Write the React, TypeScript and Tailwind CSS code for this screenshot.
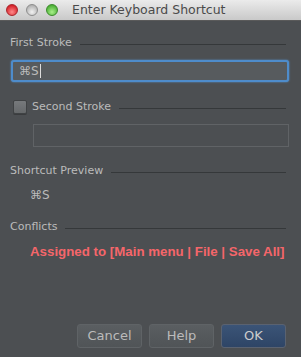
import React from "react";

function Header({ label, className = "" }: { label: string; className?: string }) {
  return (
    <div className={`flex items-center h-[14px] ${className}`}>
      <span className="text-[11px] leading-[14px] text-[#bbbbbb] whitespace-nowrap">{label}</span>
      <div className="flex-1 ml-[8px] mr-[3px] mt-[2px] h-px bg-[#35383a]" />
    </div>
  );
}

function Light({ from, to, border }: { from: string; to: string; border: string }) {
  return (
    <div
      className="w-[12px] h-[12px] rounded-full border"
      style={{ background: `radial-gradient(circle at 50% 70%, ${to}, ${from})`, borderColor: border }}
    />
  );
}

export default function App() {
  return (
    <div
      className="w-[301px] h-[357px] bg-[#4c4f52] flex flex-col overflow-hidden"
      style={{ fontFamily: "'DejaVu Sans', 'Liberation Sans', sans-serif" }}
    >
      <div className="h-[21px] flex items-center bg-gradient-to-b from-[#ebebeb] to-[#c9c9c9] border-b border-[#5a5a5a] shrink-0">
        <div className="flex items-center gap-[8px] ml-[6px]">
          <Light from="#c8000a" to="#ff8a8a" border="#a8252b" />
          <Light from="#9d9d9d" to="#f2f2f2" border="#8d8d8d" />
          <Light from="#2f9b1b" to="#a8f08a" border="#3b8a2b" />
        </div>
        <span className="ml-[14px] text-[12.5px] text-[#4a4a4a]">Enter Keyboard Shortcut</span>
      </div>

      <div className="flex flex-col pl-[10px] pr-[12px]">
        <Header label="First Stroke" className="mt-[15px]" />
        <div className="mt-[10px] ml-[1px] h-[22px] rounded-[3px] border-[2px] border-[#4e8ccb] bg-[#575b5e] flex items-center pl-[6px] shadow-[0_0_2px_#5a9ad8]">
          <span className="text-[12px] text-[#bbbbbb]">⌘S</span>
          <span className="w-px h-[14px] bg-[#dddddd] ml-[1px]" />
        </div>

        <div className="flex items-center mt-[18px] h-[14px]">
          <div className="w-[14px] h-[14px] ml-[3px] rounded-[2px] border border-[#3f4244] bg-gradient-to-b from-[#76797c] to-[#66696b] shadow-[0_1px_0_#3a3c3e]" />
          <span className="ml-[5px] text-[11px] text-[#bbbbbb] whitespace-nowrap">Second Stroke</span>
          <div className="flex-1 ml-[8px] mr-[3px] mt-[2px] h-px bg-[#35383a]" />
        </div>
        <div className="mt-[10px] ml-[23px] h-[23px] border border-[#606366] bg-[#4c4f52]" />

        <Header label="Shortcut Preview" className="mt-[17px]" />
        <div className="mt-[10px] ml-[20px] h-[14px] text-[12px] leading-[14px] text-[#bbbbbb]">⌘S</div>

        <Header label="Conflicts" className="mt-[18px]" />
        <div
          className="mt-[10px] ml-[20px] text-[13.3px] leading-[16px] font-bold text-[#f5666a] whitespace-nowrap"
          style={{ fontFamily: "'Liberation Sans', Arial, sans-serif" }}
        >
          Assigned to [Main menu | File | Save All]
        </div>
      </div>

      <div className="mt-auto mb-[9px] flex justify-end gap-[7px] pr-[15px]">
        <button className="w-[65px] h-[24px] rounded-[3px] border border-[#5f6366] bg-gradient-to-b from-[#5a5e61] to-[#505457] text-[13px] text-[#bbbbbb]">
          Cancel
        </button>
        <button className="w-[65px] h-[24px] rounded-[3px] border border-[#5f6366] bg-gradient-to-b from-[#5a5e61] to-[#505457] text-[13px] text-[#bbbbbb]">
          Help
        </button>
        <button className="w-[65px] h-[24px] rounded-[3px] border border-[#5a6270] bg-gradient-to-b from-[#3b5477] to-[#2e4566] text-[13px] text-[#cccccc]">
          OK
        </button>
      </div>
    </div>
  );
}
